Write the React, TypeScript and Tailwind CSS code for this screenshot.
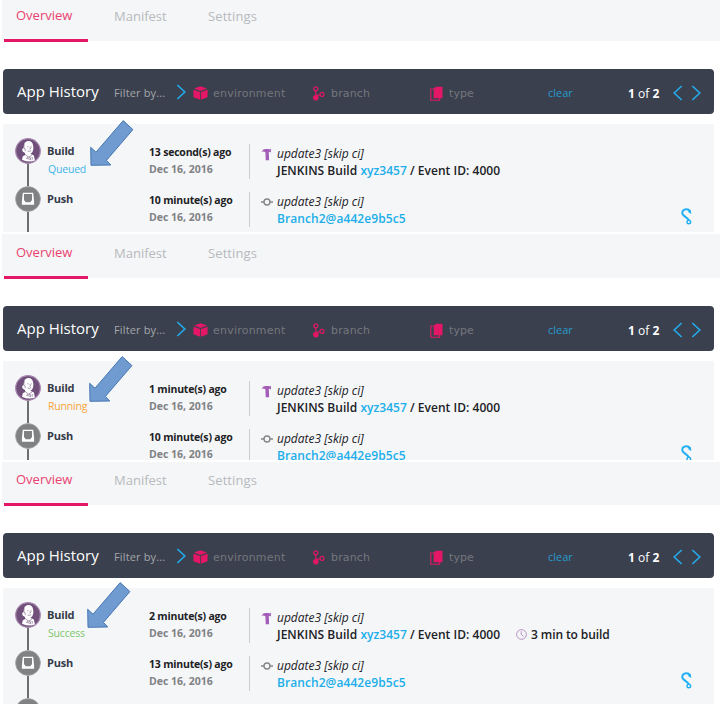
import React from "react";

type Panel = {
  tabs: string;
  body: string;
  status: string;
  statusColor: string;
  buildAgo: string;
  pushAgo: string;
  arrow: string;
  duration?: string;
  more?: boolean;
};

const panels: Panel[] = [
  { tabs: "h-[41px]", body: "h-[108px] mb-[2px]", status: "Queued", statusColor: "text-[#3fb4e8]", buildAgo: "13 second(s) ago", pushAgo: "10 minute(s) ago", arrow: "left-[82px] top-[-5px]" },
  { tabs: "h-[44px]", body: "h-[99px] mb-[2px]", status: "Running", statusColor: "text-[#f9a53a]", buildAgo: "1 minute(s) ago", pushAgo: "10 minute(s) ago", arrow: "left-[81px] top-[-6px]" },
  { tabs: "h-[43px]", body: "h-[116px]", status: "Success", statusColor: "text-[#7cc66a]", buildAgo: "2 minute(s) ago", pushAgo: "13 minute(s) ago", arrow: "left-[79px] top-[-7px]", duration: "3 min to build", more: true },
];

function Chevron({ left = false, className = "" }: { left?: boolean; className?: string }) {
  return (
    <svg viewBox="0 0 10 16" className={`h-4 w-[10px] shrink-0 ${className}`} fill="none" stroke="#25a9ea" strokeWidth="1.7">
      <path d={left ? "M8.7 1 1.2 8l7.5 7" : "M1.3 1 8.8 8l-7.5 7"} />
    </svg>
  );
}

function Cube() {
  return (
    <svg viewBox="0 0 15 14" className="h-[14px] w-[15px] shrink-0" fill="#e31765">
      <path d="M7.5.3 14 2.6 7.5 5 1 2.6zM.4 3.7 7.1 6v7.7L.4 11.2zM14.6 3.7 7.9 6v7.7l6.7-2.5z" />
    </svg>
  );
}

function Branch() {
  return (
    <svg viewBox="0 0 12 15" className="h-[15px] w-3 shrink-0" fill="none" stroke="#e31765" strokeWidth="1.2">
      <circle cx="2.8" cy="2.8" r="2" />
      <circle cx="9" cy="8.4" r="2" />
      <circle cx="2.8" cy="11.8" r="2.2" fill="#e31765" />
      <path d="M2.8 5v5M7 8.6Q4 8.8 2.8 11" />
    </svg>
  );
}

function Pages() {
  return (
    <svg viewBox="0 0 13 15" className="h-[15px] w-[13px] shrink-0">
      <path d="M4 3H.8v11.2h8.8V11" fill="none" stroke="#e31765" strokeWidth="1.1" />
      <path d="M5.8.8h6.7v11.4H3.7V3z" fill="#e31765" />
    </svg>
  );
}

function Jenkins() {
  return (
    <svg viewBox="0 0 26 26" className="h-[26px] w-[26px] shrink-0">
      <circle cx="13" cy="13" r="12.3" fill="#70507a" stroke="#a785ad" strokeWidth="1.2" />
      <path d="M9.2 6.2Q10 3.3 13.5 3.1q4 .2 4.6 4.3.7 2.7-.1 5-.5 2.3-2.6 3.3l3.5 1.7 1 5.1Q14 25 7 21.7l.8-3.4 2.8-1.6-.9-1.9-2.1-1.4-.5-2.2 1.2-1z" fill="#fff" />
      <path d="M9.3 6.3 8.6 10l1.4.6.3 2.5M12.2 8.8h1.2M15.8 8.8h1M14.9 9l.6 2-.9.4M12.6 13q2 1 3.4-.4M10.5 17l3.2 2.1 3.2-2M12.6 19l-1 1.6 2 .2 1.9.9v-2l-1.8-.4M17.2 19v2.7" fill="none" stroke="#70507a" strokeWidth=".6" />
    </svg>
  );
}

function Inbox() {
  return (
    <svg viewBox="0 0 26 26" className="h-[26px] w-[26px] shrink-0">
      <circle cx="13" cy="13" r="12.4" fill="#7f8183" stroke="#a2a4a6" strokeWidth=".8" />
      <path d="M7.8 6.8h10.4l.9 8.7v3.3H6.9v-3.3z" fill="#fff" />
      <path d="M9 8h8v6.6h-.5l-1.2 1.6h-4.6l-1.2-1.6H9z" fill="#7f8183" />
    </svg>
  );
}

function Hammer() {
  return (
    <svg viewBox="0 0 11 13" className="h-[13px] w-[11px] shrink-0" fill="#a45cb9">
      <path d="M.7 4Q1.6 1.2 4.2 1h3.6l.3.5L9.9.7v3.8l-1.8-.8h-.3l.3 8.5H4.7l-.3-8Q2.2 3 .7 4z" />
    </svg>
  );
}

function Commit() {
  return (
    <svg viewBox="0 0 12 8" className="h-2 w-3 shrink-0" fill="none" stroke="#858789" strokeWidth="1.4">
      <circle cx="6" cy="4" r="3" />
      <path d="M0 4h3M9 4h3" />
    </svg>
  );
}

function Hook() {
  return (
    <svg viewBox="0 0 12 17" className="h-[17px] w-3" fill="none" stroke="#20aff2" strokeWidth="1.9">
      <path d="M9 3.2Q7.8 1.1 5.2 1.2 1.4 1.4 1.2 5c0 3.2 5.6 4.2 6.8 7.6" />
      <circle cx="7.8" cy="14" r="1.8" strokeWidth="1.4" />
      <path d="M6.8 4 9.6 1.8 10.4 6z" fill="#20aff2" stroke="none" />
    </svg>
  );
}

function Arrow({ className }: { className: string }) {
  return (
    <svg viewBox="0 0 50 48" className={`absolute h-12 w-[50px] ${className}`} fill="#709bd0" stroke="#4577b4" strokeWidth="1">
      <path d="M38.2 1.6 47.9 10.6 21.4 41.4l4.4 4.6-19.8.3-.3-18 5.3 4.9z" />
    </svg>
  );
}

function Row({ name, status, statusColor = "", ago, children, icon, event }: {
  name: string; status?: string; statusColor?: string; ago: string; children: React.ReactNode; icon: React.ReactNode; event: React.ReactNode;
}) {
  return (
    <div className="flex h-12 shrink-0">
      <div className="flex w-[38px] shrink-0 flex-col items-center pl-[12px]">
        {icon}
        <div className="w-[2px] flex-1 bg-[#6d6e70]" />
      </div>
      <div className="w-[108px] shrink-0 pl-[6px] pt-[4px] leading-[18px]">
        <div className="text-[11px] font-bold tracking-[-0.2px] text-[#343a48]">{name}</div>
        {status && <div className={`pl-px text-[10.5px] tracking-[-0.2px] ${statusColor}`}>{status}</div>}
      </div>
      <div className="w-[100px] shrink-0 pt-[6px] text-[10.5px] font-bold leading-[17px]">
        <div className="tracking-[-0.2px] text-[#202124]">{ago}</div>
        <div className="text-[#808285]">Dec 16, 2016</div>
      </div>
      <div className="mt-[6px] h-[35px] w-px shrink-0 bg-[#cbcdd0]" />
      <div className="flex h-[26px] w-[27px] shrink-0 items-center self-start pl-[11px] pt-[6px]">{event}</div>
      <div className="whitespace-nowrap pt-[7px] text-[12px] leading-[17px] text-[#202124]">
        <div className="italic">update3 [skip ci]</div>
        {children}
      </div>
    </div>
  );
}

function History({ p }: { p: Panel }) {
  return (
    <section>
      <nav className={`ml-[2px] flex items-end bg-[#f5f6f8] pl-[2px] text-[13px] leading-[18px] text-[#b7b9bc] ${p.tabs}`}>
        <div className="-mb-px w-[84px] border-b-[3px] border-[#e31765] pb-[15px] pl-[12px] text-[#e9426f]">Overview</div>
        <div className="w-[94px] pb-[16px] pl-[26px]">Manifest</div>
        <div className="pb-[16px] pl-[26px] tracking-[.1px]">Settings</div>
      </nav>
      <header className="ml-[3px] mt-[28px] flex h-[45px] w-[711px] items-center rounded-[4px] bg-[#3a404d] text-[11px] text-[#74777e]">
        <div className="w-[97px] whitespace-nowrap pl-[14px] text-[15px] text-white">App History</div>
        <div className="w-[63px] whitespace-nowrap pl-[14px] pt-[3px] tracking-[.15px] text-[#a4a7ac]">Filter by...</div>
        <Chevron className="ml-[13px]" />
        <div className="ml-[7px] flex w-[119px] items-center gap-[5px] pt-[3px] font-['DejaVu_Sans'] tracking-[.22px]"><Cube /><span className="pt-[2px]">environment</span></div>
        <div className="flex w-[118px] items-center gap-[6px] pl-px pt-[3px] font-['DejaVu_Sans'] tracking-[.15px]"><Branch /><span className="pt-[2px]">branch</span></div>
        <div className="flex w-[118px] items-center gap-[6px] pt-[3px] font-['DejaVu_Sans'] tracking-[.1px]"><Pages /><span className="pt-[2px]">type</span></div>
        <div className="w-[80px] pt-[4px] text-[#269dcf]">clear</div>
        <div className="w-[45px] pt-[4px] text-[12px] text-white"><b>1</b> of <b>2</b></div>
        <Chevron left className="mt-[3px]" />
        <Chevron className="ml-[8px] mt-[3px]" />
      </header>
      <div className={`relative ml-[3px] mt-[10px] w-[711px] bg-[#f5f6f8] ${p.body}`}>
        <div className="flex h-full flex-col overflow-hidden pt-[14px]">
          <Row name="Build" status={p.status} statusColor={p.statusColor} ago={p.buildAgo} icon={<Jenkins />} event={<Hammer />}>
            <div className="flex font-semibold">
              <span className="tracking-[.03px]">JENKINS Build <span className="text-[#20aeea]">xyz3457</span> / Event ID: 4000</span>
              {p.duration && (
                <span className="ml-[16px] flex items-center gap-[4px] tracking-[-0.1px]">
                  <svg viewBox="0 0 12 12" className="h-[11px] w-[11px]" fill="none" stroke="#b188bd"><circle cx="6" cy="6" r="5.3" /><path d="M5.7 2.5V6l2.6 2" /></svg>
                  {p.duration}
                </span>
              )}
            </div>
          </Row>
          <div className="flex shrink-0 justify-between pr-[21px]">
            <Row name="Push" ago={p.pushAgo} icon={<Inbox />} event={<Commit />}>
              <div className="font-semibold tracking-[.07px] text-[#20aeea]">Branch2@a442e9b5c5</div>
            </Row>
            <div className="pt-[22px]"><Hook /></div>
          </div>
          {p.more && <div className="shrink-0 pl-[12px]"><Inbox /></div>}
        </div>
        <Arrow className={p.arrow} />
      </div>
    </section>
  );
}

export default function App() {
  return (
    <main className="h-[720px] w-[720px] overflow-hidden bg-white font-['Open_Sans','Noto_Sans',sans-serif]">
      {panels.map((p) => <History key={p.status} p={p} />)}
    </main>
  );
}
